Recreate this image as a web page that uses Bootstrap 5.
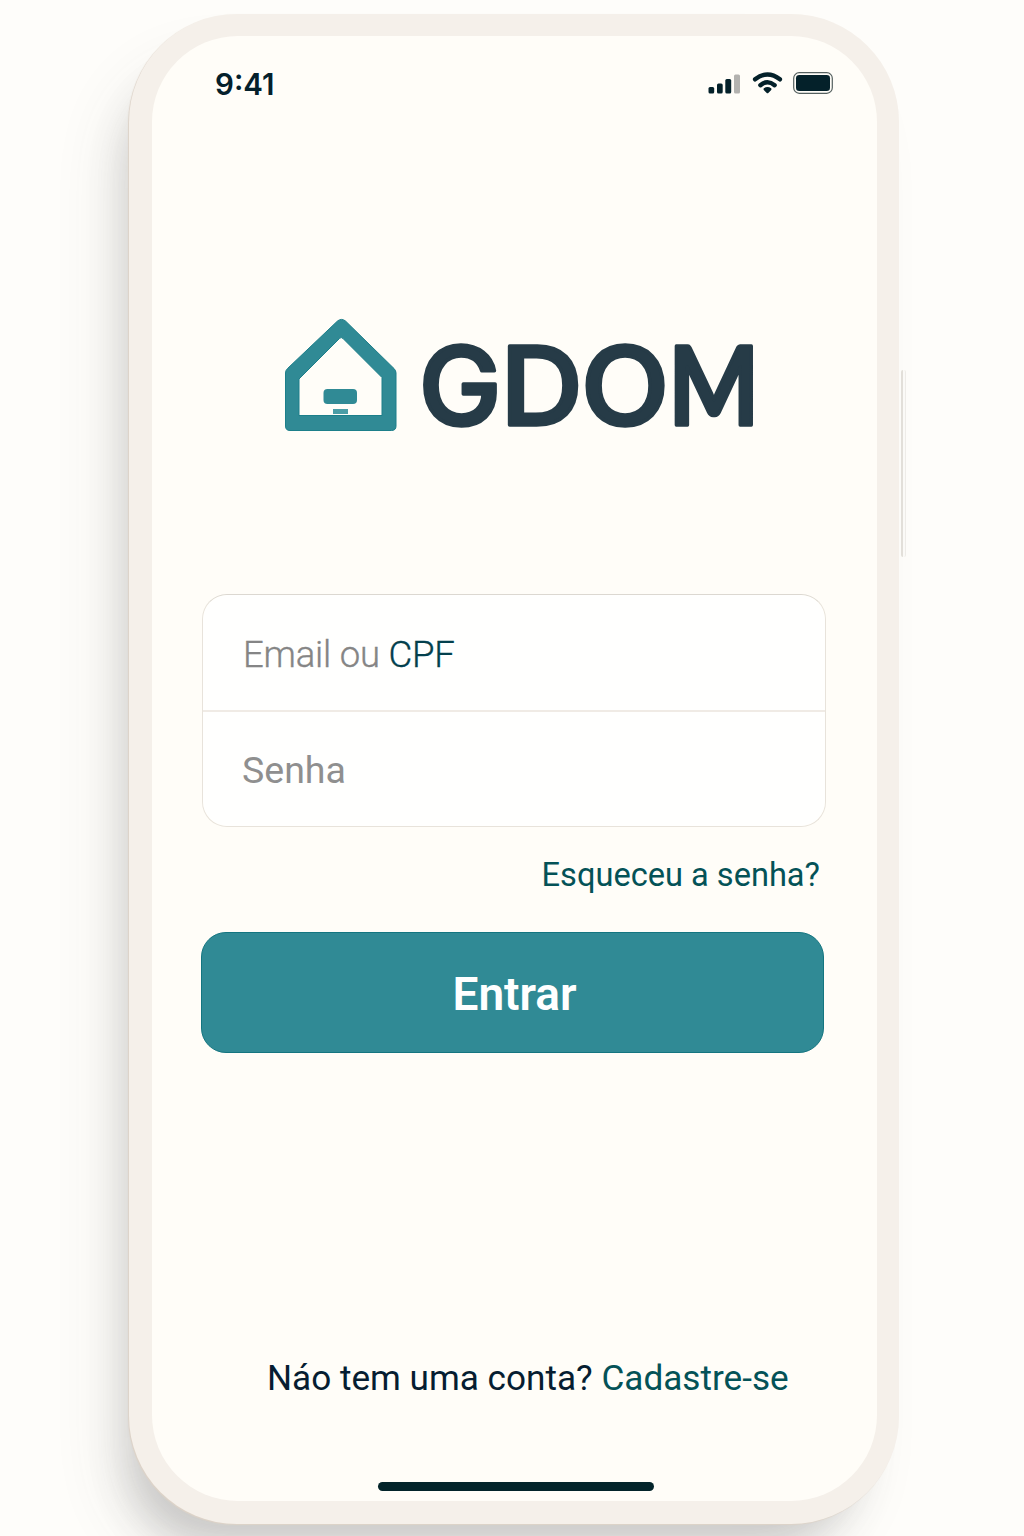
<!DOCTYPE html>
<html lang="pt-BR">
<head>
<meta charset="utf-8">
<meta name="viewport" content="width=device-width, initial-scale=1">
<title>GDOM</title>
<link href="https://cdn.jsdelivr.net/npm/bootstrap@5.3.0/dist/css/bootstrap.min.css" rel="stylesheet">
<style>
body{background:#fefdfa;font-family:Roboto,sans-serif;height:1536px;overflow:hidden}
.stage{width:1024px;height:1536px;padding:14px 0 0 129px;overflow:hidden}
.phone{width:770px;height:1510px;background:#f5f0ea;border-radius:108px;padding:22px 22px 23px 23px;
box-shadow:-1px 1px 1px #ddd3c8,-22px 44px 42px -22px rgba(60,60,65,.2),-28px 40px 64px -14px rgba(70,70,70,.11)}
.screen{width:725px;height:1465px;background:#fffdf8;border-radius:86px}
.side-key{left:901px;top:370px;width:5px;height:187px;border-left:2px solid #e2dfd9;border-right:1px solid #eeece8;border-radius:2px;background:#fbfaf7}
.status{height:95px;padding:35px 44px 0 63px}
.clock{font:600 29.5px/26px Inter,sans-serif;color:#04202b}
.clock .colon{position:relative;top:-2px}
.brand{margin:175px 0 0 133px;width:474px;height:150px}
.brand text{font-family:Inter,sans-serif;font-weight:500;font-size:109px}
.brand .lg-m{font-family:Lato,sans-serif;font-weight:700}
.form-area{margin:138px 52px 0 49px}
.fields{width:624px;height:233px;margin-left:1px;border:1px solid #e8e3db;border-top-color:#dcd8d1;border-radius:25px;--bs-list-group-bg:#fffffe}
.field{height:115px;padding:5px 40px 0;border:0;background:#fffffe;font-size:36.5px;font-weight:300;color:#858585;letter-spacing:-.22px;-webkit-text-stroke:.35px}
.field+.field{height:116px;padding:2px 39px 0;border-top:2px solid #f0ebe5;font-weight:400;font-size:37.5px;letter-spacing:0;-webkit-text-stroke:0;color:#8f8f8f}
.cpf{color:#03404d}
.forgot{height:105px;padding:29px 5px 0 0;font-size:32.6px;line-height:38px;color:#045257}
.enter{width:623px;height:121px;border-radius:25px;background:#308a95;border:1px solid #147580;color:#fff;font-size:46px;font-weight:600;padding:10px 8px 6px 12px;--bs-btn-hover-bg:#267b85}
.signup{margin:304px 0 0 115px;font-size:35.150px;line-height:42px;color:#061d31}
.signup a{color:#045257}
.home-bar{width:276px;height:9px;border-radius:5px;background:#03242a;margin:83px 0 0 226px}
</style>
</head>
<body>
<main class="stage position-relative">
<div class="side-key position-absolute"></div>
<div class="phone">
<div class="screen d-flex flex-column">
<header class="status d-flex justify-content-between align-items-start flex-shrink-0">
<span class="clock">9<span class="colon">:</span>41</span>
<svg width="126" height="26" viewBox="0 0 126 26" aria-hidden="true">
<g fill="#04212a"><rect x="1.500" y="16" width="5.700" height="6.500" rx="1.500"/><rect x="10" y="12.500" width="5.700" height="10" rx="1.500"/><rect x="18.300" y="8" width="5.900" height="14.500" rx="1.500"/></g>
<rect x="27" y="3.500" width="6" height="19" rx="1.500" fill="#b3b2af"/>
<g fill="none" stroke="#04212a" stroke-width="4.400" stroke-linecap="round"><path d="M48.100 8.300Q60.500-1.500 72.900 8.300"/><path d="M53.400 14.200Q60.500 8.300 67.600 14.200"/></g>
<path d="M56.800 17.200Q60.500 15 64.200 17.200Q65 18.200 64 19.200L61.500 21.800Q60.500 22.800 59.500 21.800L57 19.200Q56 18.200 56.800 17.200Z" fill="#04212a"/>
<rect x="86.700" y="1.700" width="38.600" height="20.600" rx="5.500" fill="#fffdf8" stroke="#55605f" stroke-width="1.200"/>
<rect x="89" y="4" width="34" height="16" rx="3.300" fill="#04212a"/>
</svg>
</header>
<svg class="brand flex-shrink-0" viewBox="0 -12 474 150" role="img" aria-label="GDOM">
<path fill="#308a95" stroke="#1d7f8a" stroke-width="1" fill-rule="evenodd" d="M52.500 3Q56.500-.2 60.500 3L109 50.500Q111 52.500 111 55V108Q111 112.500 106.500 112.500H5Q.5 112.500.5 108V55Q.5 52.500 2.500 50.500ZM54.500 20.500L14 61V97.500H97V59.500L58 20.500Q56.200 18.500 54.500 20.500Z"/>
<rect x="38.500" y="71" width="33.500" height="15" rx="4" fill="#308a95"/>
<rect x="48" y="91" width="15" height="5" fill="#4b9da6"/>
<g fill="#263b47" stroke="#263b47" stroke-width="3.500" stroke-linejoin="round">
<text transform="translate(133.700 107) scale(1.015 1)">G</text>
<text transform="translate(215.600 107) scale(1.045 1)">D</text>
<text transform="translate(296 107) scale(1.055 1)">O</text>
<text class="lg-m" transform="translate(383.500 107) scale(.88 1)">M</text>
</g>
</svg>
<section class="form-area flex-shrink-0">
<div class="fields list-group overflow-hidden">
<label class="field list-group-item d-flex align-items-center"><span>Email ou <span class="cpf">CPF</span></span></label>
<label class="field list-group-item d-flex align-items-center"><span>Senha</span></label>
</div>
<div class="forgot text-end"><a class="text-reset text-decoration-none" href="#">Esqueceu a senha?</a></div>
<button class="enter btn d-flex align-items-center justify-content-center" type="button">Entrar</button>
</section>
<div class="signup flex-shrink-0 text-nowrap">Náo tem uma conta? <a class="text-decoration-none" href="#">Cadastre-se</a></div>
<div class="home-bar flex-shrink-0"></div>
</div>
</div>
</main>
<script src="https://cdn.jsdelivr.net/npm/bootstrap@5.3.0/dist/js/bootstrap.bundle.min.js"></script>
</body>
</html>
